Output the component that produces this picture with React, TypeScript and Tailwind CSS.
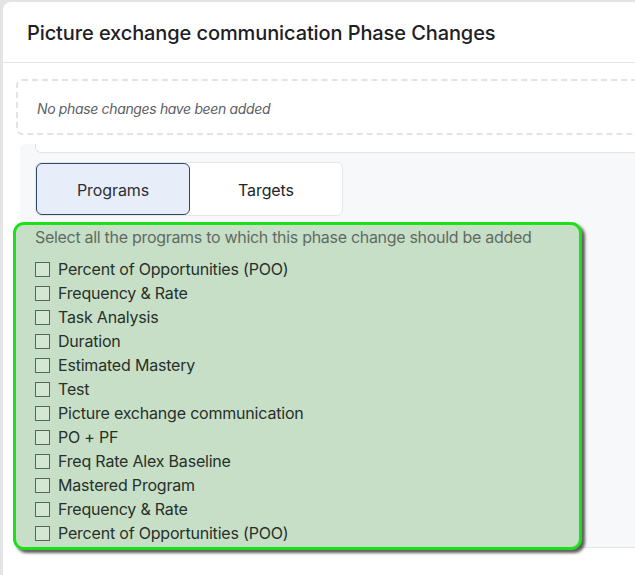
const programs = [
  "Percent of Opportunities (POO)",
  "Frequency & Rate",
  "Task Analysis",
  "Duration",
  "Estimated Mastery",
  "Test",
  "Picture exchange communication",
  "PO + PF",
  "Freq Rate Alex Baseline",
  "Mastered Program",
  "Frequency & Rate",
  "Percent of Opportunities (POO)",
];

const App = () => {
  return (
    <div className="h-[575px] w-[635px] overflow-hidden bg-[#e4e4e6] pl-[3px] pt-[2px] font-['Inter',sans-serif]">
      <div className="h-[600px] w-[680px] rounded-tl-lg bg-white">
        {/* Header */}
        <div className="flex h-[61px] items-center border-b border-[#e4e5e9] pl-6 pt-[2px]">
          <h2 className="text-[20px] font-medium tracking-[-0.1px] text-[#1d2024]">
            Picture exchange communication Phase Changes
          </h2>
        </div>

        {/* Body */}
        <div className="pl-[13px] pt-4">
          <div className="flex h-[56px] items-center rounded-md border-2 border-dashed border-[#e2e3e6] pl-[19px] pt-[3px]">
            <span className="text-[14px] italic tracking-[-0.35px] text-[#5c6066]">No phase changes have been added</span>
          </div>

          <div className="ml-[4px] mt-[9px] h-[404px] rounded-tl-md border-b border-[#e3e4e8] bg-[#f7f8fa] pl-[15px]">
            <div className="h-[9px] rounded-bl-md border-b border-l border-[#e3e4e8] bg-white" />

            {/* Tabs */}
            <div className="mt-[9px] flex h-[54px] w-[308px] rounded-md border border-[#e6e7ea] bg-white">
              <button className="flex-1 rounded-md border border-[#2e4868] bg-[#e8eef9] pt-[2px] text-[16px] tracking-[-0.1px] text-[#2b2f35]">
                Programs
              </button>
              <button className="flex-1 pt-[2px] text-[16px] tracking-[-0.1px] text-[#1f2328]">Targets</button>
            </div>

            {/* Program list */}
            <div className="relative z-10 -ml-[22px] mt-[6px] w-[569px] rounded-[11px] border-[3px] border-[#1ee01a] bg-[#c8dfc7] pb-[2px] pl-[19px] pt-[2px] shadow-[3px_3px_3px_rgba(40,40,40,0.75)]">
              <p className="text-[16px] leading-5 tracking-[-0.3px] text-[#5f6b63]">
                Select all the programs to which this phase change should be added
              </p>
              <ul className="mt-[10px]">
                {programs.map((p, i) => (
                  <li key={i} className="flex h-6 items-center gap-2">
                    <span className="h-[15px] w-[15px] border border-[#56655a] bg-[#d3e7d2]" />
                    <span className="text-[16px] tracking-[-0.2px] text-[#27302a]">{p}</span>
                  </li>
                ))}
              </ul>
            </div>
          </div>
        </div>
      </div>
    </div>
  );
};

export default App;
